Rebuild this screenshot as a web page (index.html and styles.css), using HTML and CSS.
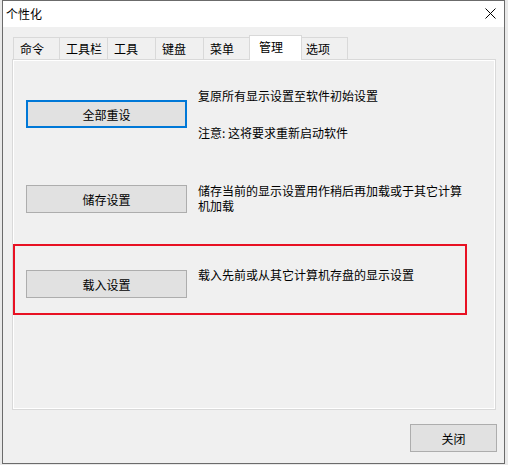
FILE: index.html
```html
<!DOCTYPE html>
<html lang="zh-CN">
<head>
  <meta charset="UTF-8" />
  <meta name="viewport" content="width=device-width, initial-scale=1.0" />
  <title>个性化</title>
  <link rel="stylesheet" href="styles.css">
</head>
<body>
<div class="window">
  <div class="titlebar">
    <span class="title">个性化</span>
    <svg class="close-x" width="11" height="11" viewBox="0 0 11 11">
      <path d="M0.5 0.5L10.5 10.5M10.5 0.5L0.5 10.5" stroke="#000" stroke-width="1" fill="none"/>
    </svg>
  </div>

  <div class="dialog-body">
    <div class="tabs">
      <div class="tab tab-first">命令</div>
      <div class="tab">工具栏</div>
      <div class="tab">工具</div>
      <div class="tab">键盘</div>
      <div class="tab">菜单</div>
      <div class="tab active">管理</div>
      <div class="tab">选项</div>
    </div>

    <div class="panel">
      <div class="row row-reset">
        <button class="btn btn-default">全部重设</button>
        <div class="desc">
          <p>复原所有显示设置至软件初始设置</p>
          <p class="note">注意: 这将要求重新启动软件</p>
        </div>
      </div>

      <div class="row row-save">
        <button class="btn">储存设置</button>
        <div class="desc">
          <p>储存当前的显示设置用作稍后再加载或于其它计算机加载</p>
        </div>
      </div>

      <div class="row row-load highlight">
        <button class="btn">载入设置</button>
        <div class="desc">
          <p>载入先前或从其它计算机存盘的显示设置</p>
        </div>
      </div>
    </div>

    <div class="footer">
      <button class="btn btn-close">关闭</button>
    </div>
  </div>
</div>
</body>
</html>
```

FILE: styles.css
```css
* {
  box-sizing: border-box;
  margin: 0;
  padding: 0;
  font-family: "Noto Sans CJK SC", "Microsoft YaHei", sans-serif;
}

body {
  background-color: #e9e9e9;
  color: #000;
  font-size: 12px;
}

.window {
  width: 503px;
  height: 464px;
  margin-left: 2px;
  border: 1px solid #6b6b6b;
  background-color: #f0f0f0;
}

.titlebar {
  height: 26px;
  background-color: #fff;
  display: flex;
  align-items: center;
  justify-content: space-between;
  padding: 0 8px 0 3px;
}

.title {
  line-height: 26px;
}

.close-x {
  display: block;
  margin-top: -1px;
}

.dialog-body {
  padding: 8px 7px 0 9px;
}

.tabs {
  display: flex;
  align-items: flex-end;
  height: 24px;
  padding-left: 1px;
}

.tab {
  width: 49px;
  height: 22px;
  margin-left: -1px;
  padding-left: 6px;
  line-height: 21px;
  border: 1px solid #d9d9d9;
  border-bottom: none;
  background-color: #f0f0f0;
  white-space: nowrap;
}

.tab-first {
  width: 47px;
  margin-left: 0;
}

.tab.active {
  position: relative;
  z-index: 1;
  width: 53px;
  height: 25px;
  margin: 0 -2px -1px -3px;
  padding-left: 9px;
  background-color: #fff;
}

.panel {
  width: 484px;
  height: 351px;
  border: 1px solid #d9d9d9;
  box-shadow: inset 0 0 0 1px #fff;
  padding-top: 28px;
}

.row {
  display: flex;
  align-items: flex-start;
  padding-left: 13px;
}

.btn {
  width: 161px;
  height: 28px;
  flex-shrink: 0;
  background-color: #e1e1e1;
  border: 1px solid #adadad;
  font-size: 12px;
  color: #000;
}

.btn-default {
  border: 2px solid #0078d7;
}

.desc {
  width: 270px;
  margin-left: 11px;
  line-height: 15px;
}

.note {
  margin-top: 22px;
}

.row-reset .btn {
  margin-top: 12px;
}

.row-save {
  margin-top: 43px;
}

.row-save .btn {
  margin-top: 2px;
}

.highlight {
  width: 454px;
  margin-top: 31px;
  padding: 21px 0 15px 11px;
  border: 2px solid #e81123;
}

.row-load .btn {
  margin-top: 3px;
}

.footer {
  display: flex;
  justify-content: flex-end;
  padding-top: 14px;
}

.btn-close {
  width: 87px;
}
```
